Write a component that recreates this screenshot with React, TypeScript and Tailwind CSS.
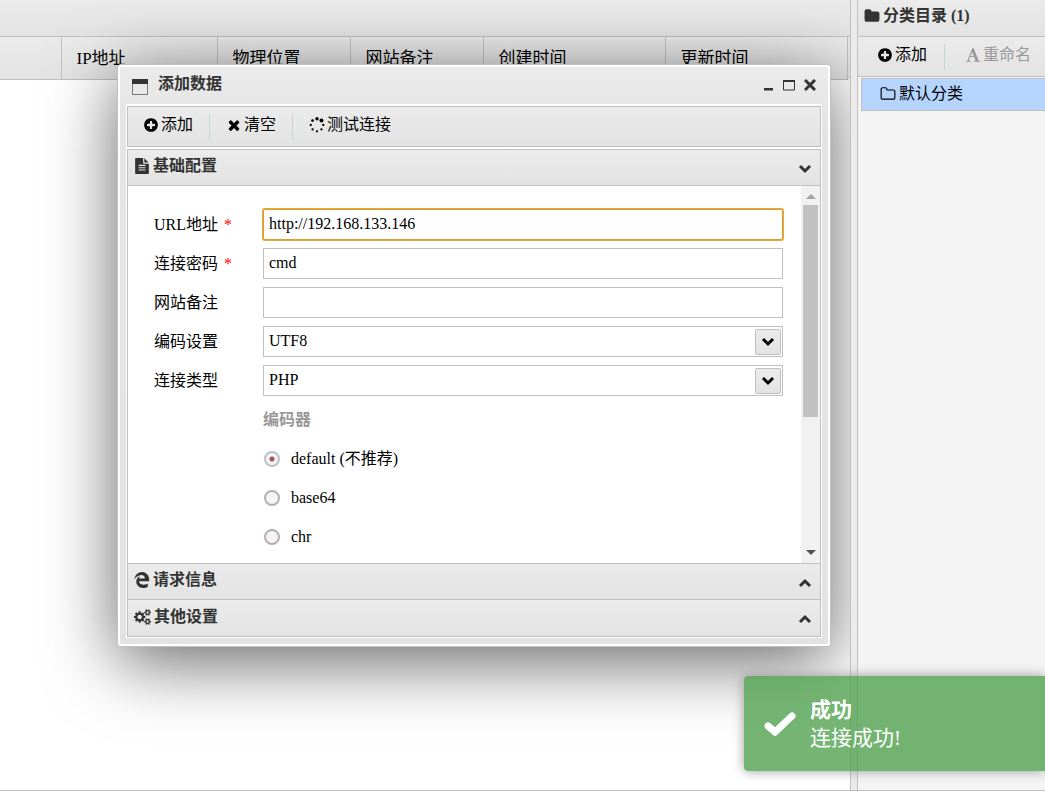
import { useState } from 'react';
import type { ReactNode } from 'react';

const PATHS = {
  plus: 'M1344 960v-128q0-26-19-45t-45-19h-256v-256q0-26-19-45t-45-19h-128q-26 0-45 19t-19 45v256h-256q-26 0-45 19t-19 45v128q0 26 19 45t45 19h256v256q0 26 19 45t45 19h128q26 0 45-19t19-45v-256h256q26 0 45-19t19-45zm320-64q0 209-103 385.5t-279.5 279.5-385.5 103-385.5-103-279.5-279.5-103-385.5 103-385.5 279.5-279.5 385.5-103 385.5 103 279.5 279.5 103 385.5z',
  remove: 'M1490 1322q0 40-28 68l-136 136q-28 28-68 28t-68-28l-294-294-294 294q-28 28-68 28t-68-28l-136-136q-28-28-28-68t28-68l294-294-294-294q-28-28-28-68t28-68l136-136q28-28 68-28t68 28l294 294 294-294q28-28 68-28t68 28l136 136q28 28 28 68t-28 68l-294 294 294 294q28 28 28 68z',
  file: 'M1596 476q14 14 28 36h-472v-472q22 14 36 28zm-476 164h544v1056q0 40-28 68t-68 28h-1344q-40 0-68-28t-28-68v-1600q0-40 28-68t68-28h800v544q0 40 28 68t68 28zm160 736v-64q0-14-9-23t-23-9h-704q-14 0-23 9t-9 23v64q0 14 9 23t23 9h704q14 0 23-9t9-23zm0-256v-64q0-14-9-23t-23-9h-704q-14 0-23 9t-9 23v64q0 14 9 23t23 9h704q14 0 23-9t9-23zm0-256v-64q0-14-9-23t-23-9h-704q-14 0-23 9t-9 23v64q0 14 9 23t23 9h704q14 0 23-9t9-23z',
  folder: 'M1728 608v704q0 92-66 158t-158 66h-1216q-92 0-158-66t-66-158v-960q0-92 66-158t158-66h320q92 0 158 66t66 158v32h672q92 0 158 66t66 158z',
  folderOpen: 'M1600 1312v-704q0-40-28-68t-68-28h-704q-40 0-68-28t-28-68v-64q0-40-28-68t-68-28h-320q-40 0-68 28t-28 68v960q0 40 28 68t68 28h1216q40 0 68-28t28-68zm128-704v704q0 92-66 158t-158 66h-1216q-92 0-158-66t-66-158v-960q0-92 66-158t158-66h320q92 0 158 66t66 158v32h672q92 0 158 66t66 158z',
  font: 'M789 559l-170 450q33 0 136.500 2t160.500 2q19 0 57-2-87-253-184-452zm-725 1105l2-79q23-7 56-12.500t57-10.500 49.500-14.500 44.500-29 31-50.500l237-616 280-724h128q8 14 11 21l205 480q33 78 106 257.500t114 274.500q15 34 58 144.500t72 168.500q20 45 35 57 19 15 88 29.500t84 20.500q6 38 6 57 0 4-.5 13t-.5 13q-63 0-190-8t-191-8q-76 0-215 7t-178 8q0-43 4-78l131-28q1 0 12.500-2.500t15.500-3.500 14.500-4.500 15-6.500 11-8 9-11 2.500-14q0-16-31-96.500t-72-177.500-42-100l-450-2q-26 58-76.500 195.500t-50.500 162.500q0 22 14 37.500t43.500 24.500 48.500 13.500 57 8.500 41 4q1 19 1 58 0 9-2 27-58 0-174.500-10t-174.500-10q-8 0-26.500 4t-21.500 4q-80 14-188 14z',
  edge: 'M45 794h1q16-126 58.500-241.500t115-217 167.500-176 223.500-117.500 276.500-43q231 0 414 105.500t294 303.500q104 187 104 442v188h-1125q1 111 53.500 192.500t136.500 122.500 189.500 57 213 3 208-46.500 173.500-84.500v377q-92 55-229.500 92t-312.500 38-316-53q-189-73-311.500-249t-124.500-372q-3-242 111-412t325-268q-48 60-78 125.500t-46 159.500h635q8-77-8-140t-47-101.500-70.500-66.500-80.500-41-75-20.500-56-8.500l-22-1q-135 5-259.500 44.500t-223.500 104.500-176 140.500-138 163.500z',
  cogs: 'M896 896q0-106-75-181t-181-75-181 75-75 181 75 181 181 75 181-75 75-181zm768 512q0-52-38-90t-90-38-90 38-38 90q0 53 37.500 90.500t90.500 37.500 90.500-37.500 37.500-90.500zm0-1024q0-52-38-90t-90-38-90 38-38 90q0 53 37.500 90.500t90.500 37.500 90.500-37.500 37.500-90.500zm-384 421v185q0 10-7 19.500t-16 10.500l-155 24q-11 35-32 76 34 48 90 115 7 11 7 20 0 12-7 19-23 30-82.500 89.500t-78.500 59.500q-11 0-21-7l-115-90q-37 19-77 31-11 108-23 155-7 24-30 24h-186q-11 0-20-7.500t-10-17.500l-23-153q-34-10-75-31l-118 89q-7 7-20 7-11 0-21-8-144-133-144-160 0-9 7-19 10-14 41-53t47-61q-23-44-35-82l-152-24q-10-1-17-9.500t-7-19.500v-185q0-10 7-19.500t16-10.500l155-24q11-35 32-76-34-48-90-115-7-11-7-20 0-12 7-20 22-30 82-89t79-59q11 0 21 7l115 90q34-18 77-32 11-108 23-154 7-24 30-24h186q11 0 20 7.500t10 17.500l23 153q34 10 75 31l118-89q8-7 20-7 11 0 21 8 144 133 144 160 0 8-7 19-12 16-42 54t-45 60q23 48 34 82l152 23q10 2 17 10.500t7 19.500zm640 533v140q0 16-149 31-12 27-30 52 51 113 51 138 0 4-4 7-122 71-124 71-8 0-46-47t-52-68q-20 2-30 2t-30-2q-14 21-52 68t-46 47q-2 0-124-71-4-3-4-7 0-25 51-138-18-25-30-52-149-15-149-31v-140q0-16 149-31 13-29 30-52-51-113-51-138 0-4 4-7 4-2 35-20t59-34 30-16q8 0 46 46.500t52 67.500q20-2 30-2t30 2q51-71 92-112l6-2q4 0 124 70 4 3 4 7 0 25-51 138 17 23 30 52 149 15 149 31zm0-1024v140q0 16-149 31-12 27-30 52 51 113 51 138 0 4-4 7-122 71-124 71-8 0-46-47t-52-68q-20 2-30 2t-30-2q-14 21-52 68t-46 47q-2 0-124-71-4-3-4-7 0-25 51-138-18-25-30-52-149-15-149-31v-140q0-16 149-31 13-29 30-52-51-113-51-138 0-4 4-7 4-2 35-20t59-34 30-16q8 0 46 46.500t52 67.500q20-2 30-2t30 2q51-71 92-112l6-2q4 0 124 70 4 3 4 7 0 25-51 138 17 23 30 52 149 15 149 31z',
};

const columns = [
  { label: 'IP地址', width: 'w-[156px]' },
  { label: '物理位置', width: 'w-[133px]' },
  { label: '网站备注', width: 'w-[133px]' },
  { label: '创建时间', width: 'w-[182px]' },
  { label: '更新时间', width: 'w-[182px]' },
];

const encoders = ['default (不推荐)', 'base64', 'chr'];

const bar = 'bg-linear-to-b from-[#ebebeb] to-[#e3e3e3]';

function Icon({ name, className = 'size-4' }: { name: keyof typeof PATHS; className?: string }) {
  return (
    <svg viewBox={name === 'cogs' ? '0 0 1920 1792' : '0 0 1792 1792'} fill="currentColor" className={`shrink-0 ${className}`}>
      <path d={PATHS[name]} />
    </svg>
  );
}

function Spinner() {
  return (
    <svg viewBox="0 0 1792 1792" fill="currentColor" className="size-4 shrink-0">
      <circle cx="896" cy="192" r="192" />
      <circle cx="1394" cy="398" r="224" />
      <circle cx="1600" cy="896" r="128" />
      <circle cx="1394" cy="1394" r="128" />
      <circle cx="896" cy="1600" r="128" />
      <circle cx="398" cy="1394" r="128" />
      <circle cx="192" cy="896" r="128" />
      <circle cx="398" cy="398" r="160" />
    </svg>
  );
}

function Chevron({ up = false }: { up?: boolean }) {
  return (
    <svg viewBox="0 0 14 10" fill="none" stroke="currentColor" strokeWidth="3" className="h-[10px] w-[14px] shrink-0">
      <path d={up ? 'M2 8l5-5 5 5' : 'M2 2l5 5 5-5'} />
    </svg>
  );
}

function SectionHeader({ icon, title, open = false }: { icon: ReactNode; title: string; open?: boolean }) {
  return (
    <button type="button" aria-expanded={open} className={`flex h-9 w-full items-center justify-between pr-2 pl-[6px] font-bold text-[#333] ${bar}`}>
      <span className="flex items-center gap-[3px] pb-[3px]">{icon}{title}</span>
      <span className="pt-[2px]"><Chevron up={!open} /></span>
    </button>
  );
}

function Field({ id, label, required = false, children }: { id: string; label: string; required?: boolean; children: ReactNode }) {
  return (
    <div className="flex h-[31px] items-center">
      <label htmlFor={id} className="w-[109px] shrink-0">
        {label}
        {required && <span className="pl-[6px] text-[#f00]">*</span>}
      </label>
      {children}
    </div>
  );
}

const control = 'h-[31px] w-full min-w-0 appearance-none border border-[#c0c0c0] bg-white px-[5px] pb-px outline-none';

function SelectBox({ id, options }: { id: string; options: string[] }) {
  return (
    <div className="relative min-w-0 flex-1">
      <select id={id} className={control}>
        {options.map((o) => <option key={o}>{o}</option>)}
      </select>
      <span className={`pointer-events-none absolute top-[3px] right-[2px] flex size-[26px] items-center justify-center rounded-xs border border-[#c0c0c0] ${bar}`}>
        <Chevron />
      </span>
    </div>
  );
}

function AddWindow() {
  const [url, setUrl] = useState('http://192.168.133.146');
  const [password, setPassword] = useState('cmd');
  const [encoder, setEncoder] = useState(encoders[0]);

  return (
    <section className="absolute top-16 left-[117px] w-[714px] rounded border border-[#c0c0c0] bg-[#e4e4e4] shadow-[0_15px_70px_0_rgba(0,0,0,0.6)]">
      <div className="rounded-[3px] border-2 border-white bg-linear-to-b from-[#ebebeb] via-[#e4e4e4] via-10% to-[#e3e3e3] px-[6px] pb-[6px]">
        <header className="flex h-[37px] items-center justify-between pr-[6px] pl-[6px] text-[#333]">
          <div className="flex items-center gap-[10px]">
            <svg viewBox="0 0 16 16" className="mt-[2px] size-4">
              <rect x="0.5" y="0.5" width="15" height="15" fill="none" stroke="#777" />
              <rect width="16" height="5" fill="#333" />
            </svg>
            <h2 className="pb-1 font-bold">添加数据</h2>
          </div>
          <div className="flex items-center gap-[9px] pb-px">
            <button type="button" aria-label="最小化">
              <svg viewBox="0 0 12 12" className="size-3"><path d="M2 9h9v2.500h-9z" fill="#333" /></svg>
            </button>
            <button type="button" aria-label="最大化">
              <svg viewBox="0 0 12 12" className="size-3"><path d="M0.500 2.500h11v8.500h-11z" fill="none" stroke="#333" /><path d="M0 1h12v2h-12z" fill="#333" /></svg>
            </button>
            <button type="button" aria-label="关闭">
              <svg viewBox="0 0 12 12" className="size-3"><path d="M1 1l10 10M11 1L1 11" stroke="#333" strokeWidth="3" /></svg>
            </button>
          </div>
        </header>

        <div className="flex flex-col gap-[2px] border border-t-2 border-white bg-white">
          <div className={`flex h-[41px] items-center border border-[#c0c0c0] px-[15px] pb-1 ${bar}`}>
            <button type="button" className="flex items-center gap-[2px] pr-4"><Icon name="plus" />添加</button>
            <span className="mt-1 h-[26px] w-px bg-[#c3d5db]" />
            <button type="button" className="flex items-center gap-[2px] px-4"><Icon name="remove" />清空</button>
            <span className="mt-1 h-[26px] w-px bg-[#c3d5db]" />
            <button type="button" className="flex items-center gap-[2px] px-4"><Spinner />测试连接</button>
          </div>

          <div className="divide-y divide-[#c0c0c0] border border-[#c0c0c0]">
            <SectionHeader icon={<Icon name="file" />} title="基础配置" open />
            <div className="flex h-[378px] overflow-hidden bg-white">
              <form className="flex min-w-0 flex-1 flex-col gap-2 pt-[23px] pr-[18px] pl-[26px]">
                <Field id="url" label="URL地址" required>
                  <input id="url" type="text" value={url} onChange={(e) => setUrl(e.target.value)} className={`${control} rounded-xs border-[#d9a036] ring-1 ring-[#e8a838]`} />
                </Field>
                <Field id="password" label="连接密码" required>
                  <input id="password" type="text" value={password} onChange={(e) => setPassword(e.target.value)} className={control} />
                </Field>
                <Field id="note" label="网站备注">
                  <input id="note" type="text" className={control} />
                </Field>
                <Field id="encode" label="编码设置">
                  <SelectBox id="encode" options={['UTF8', 'GBK', 'BIG5']} />
                </Field>
                <Field id="type" label="连接类型">
                  <SelectBox id="type" options={['PHP', 'ASP', 'CUSTOM']} />
                </Field>
                <fieldset className="pl-[109px]">
                  <legend className="mb-[3px] h-8 leading-8 font-bold text-[#999]">编码器</legend>
                  {encoders.map((name) => (
                    <label key={name} className="flex h-[39px] items-center gap-[11px] pl-px">
                      <input
                        type="radio"
                        name="encoder"
                        checked={encoder === name}
                        onChange={() => setEncoder(name)}
                        className="size-4 shrink-0 appearance-none rounded-full border-2 border-[#b5afb2] bg-[#f4f4f4] checked:border-[#bbbfcb] checked:bg-[radial-gradient(circle,#a05555_2px,#f4f4f4_3px)]"
                      />
                      {name}
                    </label>
                  ))}
                </fieldset>
              </form>
              <div className="flex w-[19px] flex-col items-center justify-between bg-[#f1f1f1] py-2">
                <div className="flex flex-col items-center gap-[6px]">
                  <svg viewBox="0 0 10 5" className="h-[5px] w-[10px]"><path d="M0 5l5-5 5 5z" fill="#a3a3a3" /></svg>
                  <div className="h-[212px] w-[15px] bg-[#c1c1c1]" />
                </div>
                <svg viewBox="0 0 10 5" className="h-[5px] w-[10px]"><path d="M0 0l5 5 5-5z" fill="#505050" /></svg>
              </div>
            </div>
            <SectionHeader icon={<Icon name="edge" />} title="请求信息" />
            <SectionHeader icon={<Icon name="cogs" className="h-4 w-[17px]" />} title="其他设置" />
          </div>
        </div>
      </div>
    </section>
  );
}

function Toast() {
  return (
    <div role="status" className="absolute right-0 bottom-[19px] flex h-[95px] w-[301px] items-center gap-[14px] rounded-l bg-[#51a351]/80 pl-5 text-[21px] leading-7 text-white shadow-[0_0_12px_#999]">
      <svg viewBox="0 0 32 24" fill="none" stroke="currentColor" strokeWidth="7" strokeLinecap="round" className="h-6 w-8 shrink-0">
        <path d="M4 14l7 6L28 4" />
      </svg>
      <div>
        <div className="font-bold">成功</div>
        <div>连接成功!</div>
      </div>
    </div>
  );
}

export default function App() {
  return (
    <div className="relative flex h-screen flex-col overflow-hidden border-b border-[#c0c0c0] bg-white font-['Liberation_Serif','Noto_Sans_CJK_SC',serif] text-base leading-5 text-black">
      <div className="flex min-h-0 flex-1">
        <main className="relative min-w-0 flex-1 overflow-hidden">
          <div className={`h-[37px] border-b border-[#c0c0c0] ${bar}`} />
          <table className="w-full table-fixed border-collapse text-[17px]">
            <thead>
              <tr className={`h-[42px] ${bar}`}>
                <th aria-label="序号" className="border-r border-b border-[#c0c0c0]" />
                {columns.map((c) => (
                  <th key={c.label} className={`border-r border-b border-[#c0c0c0] pt-[2px] pl-[15px] text-left font-normal ${c.width}`}>{c.label}</th>
                ))}
                <th aria-label="滚动条" className="w-[3px]" />
              </tr>
            </thead>
          </table>
          <AddWindow />
        </main>
        <div className="w-2 shrink-0 border-x border-[#c0c0c0] bg-[#ebebeb]" />
        <aside className="flex w-[187px] shrink-0 flex-col bg-[#f4f4f4]">
          <h2 className={`flex h-[37px] items-center gap-[3px] border-b border-[#c0c0c0] pb-1 pl-[6px] font-bold text-[#333] ${bar}`}>
            <Icon name="folder" />分类目录 (1)
          </h2>
          <div className={`flex h-10 items-center border-b border-[#c0c0c0] pb-1 pl-[19px] whitespace-nowrap ${bar}`}>
            <button type="button" className="flex items-center gap-[2px] pr-[17px]"><Icon name="plus" />添加</button>
            <span className="mt-1 h-[26px] w-px bg-[#c3d5db]" />
            <button type="button" disabled className="flex items-center gap-[2px] pl-5 text-[#999]"><Icon name="font" />重命名</button>
          </div>
          <ul className="pt-px pl-[3px]">
            <li className="flex h-[33px] items-center gap-[3px] border-y border-l border-[#c0c0c0] bg-[#b5d5ff] pb-[2px] pl-[18px]">
              <Icon name="folderOpen" />默认分类
            </li>
          </ul>
        </aside>
      </div>
      <Toast />
    </div>
  );
}
